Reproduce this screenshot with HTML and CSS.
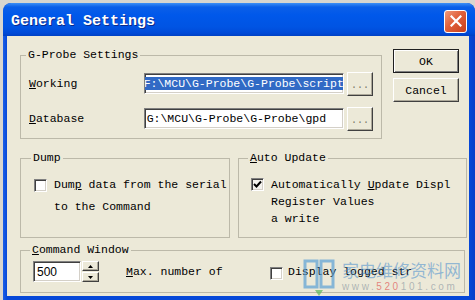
FILE: index.html
```html
<!DOCTYPE html>
<html lang="en">
<head>
    <meta charset="UTF-8">
    <title>General Settings</title>
    <link rel="stylesheet" href="styles.css">
</head>
<body>
<div class="window">
    <div class="title-bar">
        <span class="title">General Settings</span>
        <div class="close-btn">
            <svg width="12" height="12" viewBox="0 0 12 12"><path d="M1.5 1.5 L10.5 10.5 M10.5 1.5 L1.5 10.5" stroke="#fff" stroke-width="2.2" stroke-linecap="square"/></svg>
        </div>
    </div>
    <div class="client">
        <div class="top-row">
            <fieldset class="group probe-group">
                <legend>G-Probe Settings</legend>
                <div class="field-row">
                    <span class="field-label"><u>W</u>orking</span>
                    <div class="edit path-edit"><span class="selected">F:\MCU\G-Probe\G-Probe\script</span></div>
                    <div class="btn browse-btn">...</div>
                </div>
                <div class="field-row">
                    <span class="field-label"><u>D</u>atabase</span>
                    <div class="edit path-edit"><span class="plain">G:\MCU\G-Probe\G-Probe\gpd</span></div>
                    <div class="btn browse-btn">...</div>
                </div>
            </fieldset>
            <div class="button-col">
                <div class="btn dlg-btn default">OK</div>
                <div class="btn dlg-btn">Cancel</div>
            </div>
        </div>

        <div class="mid-row">
            <fieldset class="group dump-group">
                <legend>Dump</legend>
                <div class="check-row">
                    <div class="check-box"></div>
                    <div class="check-text">Dum<u>p</u> data from the serial<br>to the Command</div>
                </div>
            </fieldset>
            <fieldset class="group auto-group">
                <legend><u>A</u>uto Update</legend>
                <div class="check-row">
                    <div class="check-box checked">
                        <svg width="9" height="9" viewBox="0 0 9 9"><path d="M1 4 L3.5 6.5 L8 1.5" fill="none" stroke="#000" stroke-width="2"/></svg>
                    </div>
                    <div class="check-text">Automatically <u>U</u>pdate Displ<br>Register Values<br>a write</div>
                </div>
            </fieldset>
        </div>

        <fieldset class="group cmd-group">
            <legend><u>C</u>ommand Window</legend>
            <div class="cmd-row">
                <div class="spin">
                    <div class="edit spin-edit">500</div>
                    <div class="spin-btns">
                        <div class="btn spin-btn"><svg width="5" height="3" viewBox="0 0 5 3"><path d="M0 3 L2.5 0 L5 3 Z" fill="#000"/></svg></div>
                        <div class="btn spin-btn"><svg width="5" height="3" viewBox="0 0 5 3"><path d="M0 0 L2.5 3 L5 0 Z" fill="#000"/></svg></div>
                    </div>
                </div>
                <span class="max-label"><u>M</u>ax. number of</span>
                <div class="check-box small-drop"></div>
                <span class="log-label">Display logged str</span>
            </div>
        </fieldset>
    </div>

    <div class="watermark">
        <svg class="wm-book" width="34" height="40" viewBox="0 0 34 40">
            <path d="M3 4 H15 V30 H3 Z M19 4 H31 V30 H19 Z" fill="none" stroke="#5b9fd6" stroke-width="3" opacity="0.7"/>
            <path d="M13 33 L17 39 L21 33 Z" fill="#58b858" opacity="0.7"/>
        </svg>
        <div class="wm-text">
            <div class="wm-cn">家电维修资料网</div>
            <div class="wm-url">www.<span class="wm-red">520</span>101.com</div>
        </div>
    </div>
</div>
</body>
</html>
```

FILE: styles.css
```css
body {
    margin: 0;
    width: 475px;
    height: 300px;
    overflow: hidden;
    background-color: #d8d6cf;
    font-family: "Liberation Mono", monospace;
    font-size: 11.5px;
    color: #000;
}
.window {
    margin: 3px 0 0 3px;
    width: 472px;
    height: 297px;
    background: linear-gradient(to right, #1a5fe8, #0648d8 4px, #0648d8 466px, #0a3ec8);
    border-radius: 8px 8px 0 0;
    display: flex;
    flex-direction: column;
    position: relative;
    overflow: hidden;
}
.title-bar {
    height: 33px;
    box-sizing: border-box;
    padding: 3px 8px 0 8px;
    display: flex;
    align-items: center;
    justify-content: space-between;
    background: linear-gradient(to bottom, #3d90f6 0, #0b5fe8 4px, #0058ea 12px, #0054e3 24px, #004ad8 30px, #0041c4 33px);
    border-radius: 8px 8px 0 0;
}
.title {
    color: #fff;
    font-weight: bold;
    font-size: 15px;
    text-shadow: 1px 1px 0 #0b2b8a;
}
.close-btn {
    width: 21px;
    height: 21px;
    border: 1px solid #fff;
    border-radius: 3px;
    background: linear-gradient(135deg, #f09a7c, #e0603a 45%, #c8401c);
    display: flex;
    align-items: center;
    justify-content: center;
}
.client {
    flex: 1;
    margin: 0 6px 4px 4px;
    background-color: #ece9d8;
    box-sizing: border-box;
    padding: 12px 0 0 13px;
    display: flex;
    flex-direction: column;
}

/* group boxes */
.group {
    margin: 0;
    padding: 0 8px;
    border: 1px solid #bcb9a9;
    box-sizing: border-box;
    min-width: 0;
}
.group legend {
    padding: 0 2px;
    margin-left: -3px;
    line-height: 14px;
}

.top-row {
    display: flex;
    align-items: flex-start;
    gap: 11px;
}
.probe-group {
    width: 362px;
    height: 91px;
    padding-top: 10px;
    display: flex;
    flex-direction: column;
    gap: 12px;
}
.field-row {
    display: flex;
    align-items: center;
    height: 23px;
}
.field-label {
    width: 115px;
}
.edit {
    background: #fff;
    border: 1px solid;
    border-color: #808080 #fff #fff #808080;
    box-shadow: inset 1px 1px 0 #404040, inset -1px -1px 0 #d4d0c8;
    box-sizing: border-box;
    overflow: hidden;
    white-space: nowrap;
}
.path-edit {
    width: 201px;
    height: 21px;
    padding: 2px 2px 0 2px;
    line-height: 15px;
}
.selected {
    background-color: #316ac5;
    color: #fff;
    margin-left: -3px;
    padding-right: 1px;
}
.btn {
    background-color: #ece9d8;
    border: 1px solid;
    border-color: #fff #404040 #404040 #fff;
    box-shadow: inset -1px -1px 0 #aca899;
    box-sizing: border-box;
    display: flex;
    align-items: center;
    justify-content: center;
}
.browse-btn {
    width: 26px;
    height: 24px;
    margin-left: 3px;
    color: #7a7868;
    font-size: 10px;
    padding-top: 4px;
}
.button-col {
    margin-top: 1px;
    display: flex;
    flex-direction: column;
    gap: 5px;
}
.dlg-btn {
    width: 66px;
    height: 24px;
}
.dlg-btn.default {
    outline: 1px solid #202020;
    outline-offset: -1px;
    border-color: #202020;
    box-shadow: inset 1px 1px 0 #fff, inset -1px -1px 0 #808080;
}

/* middle */
.mid-row {
    display: flex;
    gap: 8px;
    margin-top: 12px;
}
.dump-group {
    width: 210px;
    height: 87px;
    padding: 9px 0 0 13px;
}
.auto-group {
    width: 229px;
    height: 87px;
    padding: 11px 0 0 12px;
}
.check-row {
    display: flex;
    align-items: flex-start;
    gap: 7px;
    white-space: nowrap;
}
.check-box {
    width: 13px;
    height: 13px;
    flex-shrink: 0;
    background: #fff;
    border: 1px solid;
    border-color: #808080 #fff #fff #808080;
    box-shadow: inset 1px 1px 0 #404040, inset -1px -1px 0 #d4d0c8;
    box-sizing: border-box;
    display: flex;
    align-items: center;
    justify-content: center;
}
.dump-group .check-box {
    margin-top: 5px;
}
.dump-group .check-text {
    line-height: 22px;
}
.auto-group .check-box {
    margin-top: 2px;
    background: #f4f3ee;
}
.auto-group .check-text {
    line-height: 17px;
}

/* command window */
.cmd-group {
    width: 445px;
    height: 50px;
    margin-top: 5px;
    padding: 4px 0 0 12px;
}
.cmd-row {
    display: flex;
    align-items: center;
    height: 21px;
    white-space: nowrap;
}
.spin {
    display: flex;
    width: 67px;
    height: 21px;
}
.spin-edit {
    width: 48px;
    height: 21px;
    font-family: "Liberation Sans", Arial, sans-serif;
    font-size: 12px;
    line-height: 16px;
    padding: 2px 0 0 3px;
}
.spin-btns {
    display: flex;
    flex-direction: column;
    width: 19px;
}
.spin-btn {
    height: 10px;
    width: 17px;
    margin-left: 1px;
}
.spin-btn + .spin-btn {
    margin-top: 1px;
}
.max-label {
    margin-left: 26px;
    width: 144px;
}
.small-drop {
    margin-top: 3px;
}
.log-label {
    margin-left: 5px;
}

/* overlay watermark */
.watermark {
    position: absolute;
    left: 299px;
    top: 254px;
    display: flex;
    gap: 6px;
    pointer-events: none;
}
.wm-text {
    display: flex;
    flex-direction: column;
    padding-top: 2px;
}
.wm-cn {
    font-family: "Noto Sans CJK SC", sans-serif;
    font-size: 17px;
    line-height: 22px;
    color: rgba(70, 140, 205, 0.55);
}
.wm-url {
    font-family: "Liberation Sans", sans-serif;
    font-size: 10px;
    line-height: 11px;
    letter-spacing: 2.6px;
    color: rgba(120, 135, 150, 0.55);
}
.wm-red {
    color: rgba(220, 60, 60, 0.6);
}
```
